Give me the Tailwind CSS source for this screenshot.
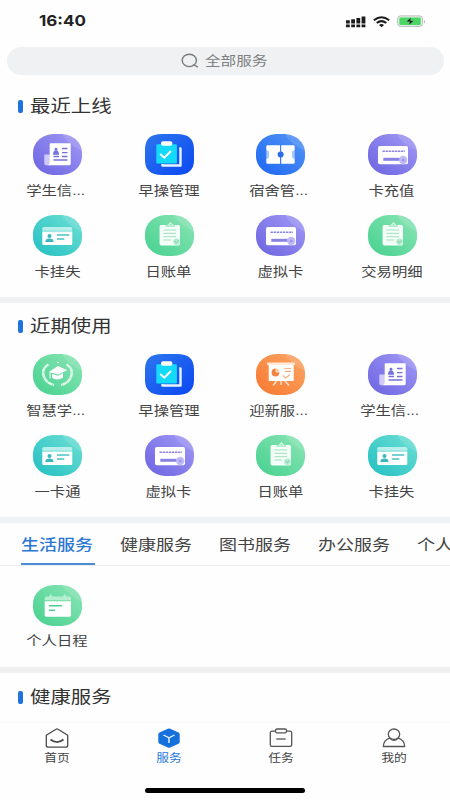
<!DOCTYPE html>
<html lang="zh-CN">
<head>
<meta charset="utf-8">
<meta name="viewport" content="width=device-width">
<title>服务</title>
<script src="https://cdn.jsdelivr.net/npm/@tailwindcss/browser@4"></script>
</head>
<body class="w-[450px] h-[800px] overflow-hidden bg-[#fefefe] font-['Liberation_Sans','Noto_Sans_CJK_SC',sans-serif] text-[#444]">
<svg width="0" height="0" class="absolute">
  <defs>
    <linearGradient id="gp" x1="0" y1="1" x2="1" y2="0"><stop offset="0" stop-color="#6b63e0"/><stop offset="1" stop-color="#a29af5"/></linearGradient>
    <linearGradient id="gb" x1="0" y1="0" x2="1" y2="1"><stop offset="0" stop-color="#2d76ee"/><stop offset="1" stop-color="#0b48f2"/></linearGradient>
    <linearGradient id="gs" x1="0" y1="1" x2="1" y2="0"><stop offset="0" stop-color="#1c66f2"/><stop offset="1" stop-color="#5596f6"/></linearGradient>
    <linearGradient id="gt" x1="0" y1="1" x2="1" y2="0"><stop offset="0" stop-color="#22bfc2"/><stop offset="1" stop-color="#6fe0d4"/></linearGradient>
    <linearGradient id="gg" x1="0" y1="1" x2="1" y2="0"><stop offset="0" stop-color="#45d18e"/><stop offset="1" stop-color="#8ce5b6"/></linearGradient>
    <linearGradient id="go" x1="0" y1="1" x2="1" y2="0"><stop offset="0" stop-color="#f8772d"/><stop offset="1" stop-color="#fba768"/></linearGradient>
    <path id="blob" d="M22 0H27C40 0 49 8.5 49 19V22C49 32.500 40 41 27 41H22C9 41 0 32.500 0 22V19C0 8.500 9 0 22 0Z"/>
    <path id="shine" d="M29 0Q33 9 49 17Q48 8 41 4Q36 0 29 0Z" fill="#fff" opacity=".12"/>
    <symbol id="news" viewBox="0 0 49 41">
      <use href="#blob" fill="url(#gp)"/><use href="#shine"/>
      <path d="M11.3 20.5H17V31.3H13Q11.3 31.3 11.3 29.5Z" fill="#cfcafa"/>
      <path d="M16.7 10.3Q16.7 9.3 17.7 9.3H36.7Q37.7 9.3 37.7 10.3V29.8Q37.7 31.3 36 31.3H14.5Q16.7 31 16.7 28.5Z" fill="#fff"/>
      <g stroke="#7771dc" stroke-width="1.3" fill="#7771dc"><circle cx="23" cy="15.2" r="1.4" stroke="none"/><path d="M20.7 20Q21 17 23 17T25.3 20ZM29 14.5H34.5M29 18.7H34.5M20.5 22.5H26M29 22.5H34.5M20.5 26H34.5"/></g>
    </symbol>
    <symbol id="clip" viewBox="0 0 49 41">
      <path d="M17 0H32Q49 0 49 15V26Q49 41 32 41H17Q0 41 0 26V15Q0 0 17 0Z" fill="url(#gb)"/>
      <path d="M34.2 14.5H35.5V31.5H17.5V30" fill="none" stroke="#e8f4ff" stroke-width="2.4" stroke-linejoin="round"/>
      <rect x="11.3" y="10.2" width="20.6" height="19.3" rx="1.2" fill="#14dafa"/>
      <rect x="16" y="7.2" width="11.4" height="4.5" rx="2" fill="#fff"/>
      <path d="M15.2 20L19.3 23.7L26 17" fill="none" stroke="#fff" stroke-width="2"/>
    </symbol>
    <symbol id="ticket" viewBox="0 0 49 41">
      <use href="#blob" fill="url(#gs)"/><use href="#shine"/>
      <path d="M11.5 11.3H24V29.7H11.5Q10.3 29.7 10.3 28.5V25L13 23V18L10.3 16V12.5Q10.3 11.3 11.5 11.3ZM25.2 11.3H37.5Q38.7 11.3 38.7 12.5V16L36 18V23L38.7 25V28.5Q38.7 29.7 37.5 29.7H25.2Z" fill="#fff"/>
      <path d="M10.3 16L13 18V23L10.3 25ZM38.7 16L36 18V23L38.7 25Z" fill="#a8c9ff"/>
      <circle cx="24.6" cy="20.6" r="3" fill="#2b6de9"/>
    </symbol>
    <symbol id="card" viewBox="0 0 49 41">
      <use href="#blob" fill="url(#gp)"/><use href="#shine"/>
      <rect x="10" y="12" width="30" height="18.3" rx="1.8" fill="#fff"/>
      <path d="M14.5 17.2H37" stroke="#8984e5" stroke-width="1.4" stroke-dasharray="2.4 .7"/>
      <path d="M15.3 25.3H32" stroke="#8883e2" stroke-width="3"/>
      <circle cx="35.2" cy="26" r="4.2" fill="#c0bbf7"/><circle cx="35.2" cy="26" r="1.6" fill="#9f99ea"/>
    </symbol>
    <symbol id="idcard" viewBox="0 0 49 41">
      <use href="#blob" fill="url(#gt)"/><use href="#shine"/>
      <path d="M9.3 15.7V13.5Q9.3 12 10.8 12H37.8Q39.3 12 39.3 13.5V15.7Z" fill="#b9efea"/>
      <path d="M9.3 16.5H39.3V28.8Q39.3 30 38 30H10.6Q9.3 30 9.3 28.8Z" fill="#fff"/>
      <circle cx="16.5" cy="21" r="2" fill="#38b9bd"/><path d="M12.3 27Q12.3 23.6 16.5 23.6T20.5 27Z" fill="#38b9bd"/>
      <path d="M24 20H36.3M24 24H31.3" stroke="#4ac3c4" stroke-width="1.5"/>
    </symbol>
    <symbol id="bill" viewBox="0 0 49 41">
      <use href="#blob" fill="url(#gg)"/><use href="#shine"/>
      <path d="M23 10.5L25.5 8L28 10.5" fill="none" stroke="#d8f7e7" stroke-width="1.3"/>
      <rect x="14.6" y="10" width="20.4" height="20.5" rx="1.7" fill="#f4fff9"/>
      <path d="M20.5 10H30V12H20.5Z" fill="#b5efd0"/>
      <path d="M18.5 15H31M18.5 18.3H31M18.5 21.7H31M18.5 25H26" stroke="#a0dfbd" stroke-width="1"/>
      <circle cx="31.5" cy="26.7" r="3.3" fill="#b5ecd0"/><path d="M29.5 26L31.4 27.7L33.6 25.5" fill="none" stroke="#6fcb9b"/>
    </symbol>
    <symbol id="grad" viewBox="0 0 49 41">
      <use href="#blob" fill="url(#gg)"/><use href="#shine"/>
      <path d="M15.5 10.5Q7.500 15 11.5 24Q14 29.3 21 31M33.5 10.5Q41.5 15 37.5 24Q35 29.3 28 31" fill="none" stroke="#dcf9e9" stroke-width="2.5" stroke-dasharray="5 .3"/>
      <path d="M15.8 18L25 12L34.2 16.2L25 20.5Z" fill="#fff"/><path d="M19 20V23.5Q23 27.5 30 23.8V19L25 21.8Z" fill="#fff"/><path d="M17 18.3V24.5" stroke="#fff"/><circle cx="25" cy="8.5" r=".8" fill="#fff"/>
    </symbol>
    <symbol id="board" viewBox="0 0 49 41">
      <use href="#blob" fill="url(#go)"/><use href="#shine"/>
      <path d="M21.5 26L17 31.5M28 26L33 31.5M25 26V31" stroke="#ffe0c7" stroke-width="1.5"/>
      <rect x="12.7" y="10" width="25" height="17" fill="#fff"/><rect x="11" y="8.5" width="28" height="2.6" rx=".8" fill="#ffe9da"/>
      <circle cx="19.5" cy="18.5" r="3.9" fill="#f28442"/><path d="M20 18V14.2A4 4 0 0 1 23.8 18Z" fill="#ffc79f" stroke="#fff" stroke-width=".6"/>
      <path d="M28.5 14.5H35M28.5 17.3H35M27 21.5L29.5 24L34 20.8" fill="none" stroke="#f8b083" stroke-width="1.2"/>
    </symbol>
    <symbol id="cal" viewBox="0 0 49 41">
      <use href="#blob" fill="url(#gg)"/><use href="#shine"/>
      <path d="M11.7 15.3V13Q11.7 11.5 13 11.5H16L17.7 8.5L19.4 11.5H30L31.7 8.5L33.4 11.5H36.5Q38 11.5 38 13V15.3Z" fill="#b4efd0"/>
      <path d="M11.7 16.3H38V30.3Q38 31.7 36.6 31.7H13Q11.7 31.7 11.7 30.3Z" fill="#fff"/>
      <path d="M16 20.8H29M16 25.3H22" stroke="#50cd90" stroke-width="1.4"/>
    </symbol>
  </defs>
</svg>

<div class="flex h-full flex-col">
  <header class="flex h-[47px] shrink-0 items-start justify-between pl-[39px] pr-[24px] pt-[11px]">
    <span class="origin-left scale-x-[1.13] font-['Inter','Liberation_Sans',sans-serif] text-[15px] font-bold leading-5 text-[#222]">16:40</span>
    <div class="flex h-5 items-center gap-[7px] pt-px">
      <svg width="20" height="12" viewBox="0 0 20 12" fill="#1b1b1b"><path d="M0 4.2H3.8V7.4H0ZM5.2 3.2H9V7.4H5.2ZM10.4 2H14.2V7.4H10.4ZM15.6 .5H19.4V7.400H15.6ZM0 8.4H3.8V11.2H0ZM5.2 8.4H9V11.2H5.2ZM10.4 8.4H14.2V11.2H10.4ZM15.6 8.4H19.4V11.2H15.6Z"/></svg>
      <svg width="17" height="12" viewBox="0 0 17 12" fill="none" stroke="#1b1b1b" stroke-width="2"><path d="M.8 4.2Q8.5 -1.7 16.2 4.2M3.7 7Q8.5 3.3 13.3 7"/><path d="M6 9Q8.5 7 11 9L8.5 11.3Z" fill="#1b1b1b" stroke="none"/></svg>
      <svg width="29" height="13" viewBox="0 0 29 13"><rect x=".6" y=".9" width="25" height="10.500" rx="3" fill="#e8f3ea" stroke="#b5bdb6"/><rect x="2.3" y="2.5" width="21.5" height="7.5" rx="1.3" fill="#4bd565"/><path d="M27 4.5Q28.7 6.5 27 8.5Z" fill="#a2a9a3"/><path d="M14 2.500L9 6.700H12.5L11.8 10L17 5.800H13.6Z" fill="#111" stroke="#7ce38e" stroke-width=".4"/></svg>
    </div>
  </header>

  <div class="ml-[7px] flex h-[28px] w-[437px] shrink-0 items-center rounded-[14px] bg-[#f0f1f3] pl-[174px] text-[#7d7f82]">
    <svg width="18" height="16" viewBox="0 0 18 16" fill="none" stroke="#77797c" stroke-width="1.4"><ellipse cx="8.3" cy="7.4" rx="7.1" ry="6.2"/><path d="M12.5 11.5L16.8 14.2"/></svg>
    <span class="ml-[6px] origin-left scale-x-[1.2] pb-px text-[13px] leading-none">全部服务</span>
  </div>

  <section class="h-[222px] shrink-0">
    <h2 class="flex h-[59px] items-center pl-[18px] pt-[4px] text-[17px] text-[#333]"><i class="mr-[7px] h-[13px] w-[5px] rounded-[2px] bg-[#1f74db]"></i><span class="origin-left scale-x-[1.2] leading-none">最近上线</span></h2>
    <div class="ml-[2px] grid w-[446px] grid-cols-4 gap-y-[16px] text-center text-[13px] leading-[14px]">
      <div class="flex h-[65px] flex-col items-center"><svg width="49" height="41"><use href="#news"/></svg><span class="mt-[9px] w-[54px] scale-x-[1.18] whitespace-nowrap text-left">学生信...</span></div>
      <div class="flex h-[65px] flex-col items-center"><svg width="49" height="41"><use href="#clip"/></svg><span class="mt-[9px] scale-x-[1.18]">早操管理</span></div>
      <div class="flex h-[65px] flex-col items-center"><svg width="49" height="41"><use href="#ticket"/></svg><span class="mt-[9px] w-[54px] scale-x-[1.18] whitespace-nowrap text-left">宿舍管...</span></div>
      <div class="flex h-[65px] flex-col items-center"><svg width="49" height="41"><use href="#card"/></svg><span class="mt-[9px] scale-x-[1.18] pr-px">卡充值</span></div>
      <div class="flex h-[65px] flex-col items-center"><svg width="49" height="41"><use href="#idcard"/></svg><span class="mt-[9px] scale-x-[1.18]">卡挂失</span></div>
      <div class="flex h-[65px] flex-col items-center"><svg width="49" height="41"><use href="#bill"/></svg><span class="mt-[9px] scale-x-[1.18] pr-px">日账单</span></div>
      <div class="flex h-[65px] flex-col items-center"><svg width="49" height="41"><use href="#card"/></svg><span class="mt-[9px] scale-x-[1.18] pr-px">虚拟卡</span></div>
      <div class="flex h-[65px] flex-col items-center"><svg width="49" height="41"><use href="#bill"/></svg><span class="mt-[9px] scale-x-[1.18] pr-px">交易明细</span></div>
    </div>
  </section>
  <div class="h-[6px] shrink-0 bg-[#f0f1f3]"></div>

  <section class="h-[214px] shrink-0">
    <h2 class="flex h-[51px] items-center pb-[4px] pl-[18px] text-[17px] text-[#333]"><i class="mr-[7px] h-[13px] w-[5px] rounded-[2px] bg-[#1f74db]"></i><span class="origin-left scale-x-[1.2] leading-none">近期使用</span></h2>
    <div class="ml-[2px] grid w-[446px] grid-cols-4 gap-y-[16px] text-center text-[13px] leading-[14px]">
      <div class="flex h-[65px] flex-col items-center"><svg width="49" height="41"><use href="#grad"/></svg><span class="mt-[9px] w-[54px] scale-x-[1.18] whitespace-nowrap text-left">智慧学...</span></div>
      <div class="flex h-[65px] flex-col items-center"><svg width="49" height="41"><use href="#clip"/></svg><span class="mt-[9px] scale-x-[1.18]">早操管理</span></div>
      <div class="flex h-[65px] flex-col items-center"><svg width="49" height="41"><use href="#board"/></svg><span class="mt-[9px] w-[54px] scale-x-[1.18] whitespace-nowrap text-left">迎新服...</span></div>
      <div class="flex h-[65px] flex-col items-center"><svg width="49" height="41"><use href="#news"/></svg><span class="mt-[9px] w-[54px] scale-x-[1.18] whitespace-nowrap text-left">学生信...</span></div>
      <div class="flex h-[65px] flex-col items-center"><svg width="49" height="41"><use href="#idcard"/></svg><span class="mt-[9px] scale-x-[1.18]">一卡通</span></div>
      <div class="flex h-[65px] flex-col items-center"><svg width="49" height="41"><use href="#card"/></svg><span class="mt-[9px] scale-x-[1.18] pr-px">虚拟卡</span></div>
      <div class="flex h-[65px] flex-col items-center"><svg width="49" height="41"><use href="#bill"/></svg><span class="mt-[9px] scale-x-[1.18] pr-px">日账单</span></div>
      <div class="flex h-[65px] flex-col items-center"><svg width="49" height="41"><use href="#idcard"/></svg><span class="mt-[9px] scale-x-[1.18] pr-px">卡挂失</span></div>
    </div>
  </section>
  <div class="h-[6px] shrink-0 bg-[#f0f1f3]"></div>

  <nav class="flex h-[43px] w-[450px] shrink-0 gap-[25px] overflow-hidden border-b border-[#ededef] pl-[21px] text-[15px] leading-[43px]">
    <span class="h-[42px] w-[74px] shrink-0 border-b-2 border-[#4c8ed6] font-medium text-[#2b77d4]"><span class="inline-block origin-left scale-x-[1.2] whitespace-nowrap">生活服务</span></span>
    <span class="w-[74px] shrink-0"><span class="inline-block origin-left scale-x-[1.2] whitespace-nowrap">健康服务</span></span>
    <span class="w-[74px] shrink-0"><span class="inline-block origin-left scale-x-[1.2] whitespace-nowrap">图书服务</span></span>
    <span class="w-[74px] shrink-0"><span class="inline-block origin-left scale-x-[1.2] whitespace-nowrap">办公服务</span></span>
    <span class="w-[74px] shrink-0"><span class="inline-block origin-left scale-x-[1.2] whitespace-nowrap">个人</span></span>
  </nav>
  <section class="ml-[2px] grid h-[101px] w-[446px] shrink-0 grid-cols-4 pt-[19px] text-[13px] leading-[14px]">
    <div class="flex flex-col items-center"><svg width="49" height="41"><use href="#cal"/></svg><span class="mt-[8px] scale-x-[1.18] pr-px">个人日程</span></div>
  </section>
  <div class="h-[6px] shrink-0 bg-[#f0f0f1]"></div>
  <h2 class="flex h-[49px] shrink-0 items-center pl-[18px] text-[17px] text-[#333]"><i class="mr-[7px] h-[13px] w-[5px] rounded-[2px] bg-[#1f74db]"></i><span class="origin-left scale-x-[1.2] leading-none">健康服务</span></h2>

  <footer class="flex grow flex-col border-t border-[#fafafa]">
    <div class="grid h-[63px] grid-cols-4 pt-[5px] text-[11px] leading-[12px]">
      <div class="flex flex-col items-center pl-px"><svg width="24" height="21" viewBox="0 0 24 21" fill="none" stroke="#4a4a4a" stroke-width="1.3" stroke-linejoin="round"><path d="M1.3 7.3L11 1.2Q12 .5 13 1.2L22.700 7.3V17.5Q22.700 19.2 20.500 19.2H3.500Q1.300 19.2 1.300 17.5Z"/><path d="M5.500 11.500Q12 16.8 18.500 11.500" stroke-width="1.7"/></svg><span class="mt-[3px] scale-x-[1.16]">首页</span></div>
      <div class="flex flex-col items-center text-[#2678dd]"><svg width="24" height="21" viewBox="0 0 24 21"><path d="M10.8 .8Q12 .2 13.2 .8L21.5 4.5Q22.7 5 22.7 6.2V14Q22.7 15.2 21.5 15.8L13.2 19.6Q12 20.1 10.8 19.6L2.5 15.8Q1.3 15.2 1.3 14V6.2Q1.3 5 2.5 4.5Z" fill="#1570dc"/><path d="M6.5 7L12 9.8L17.5 7M12 9.8V15" fill="none" stroke="#eef5ff" stroke-width="1.4"/></svg><span class="mt-[3px] scale-x-[1.16]">服务</span></div>
      <div class="flex flex-col items-center"><svg width="24" height="21" viewBox="0 0 24 21" fill="none" stroke="#555" stroke-width="1.3"><path d="M6.5 3.2H3Q1.3 3.2 1.3 4.8V16.8Q1.3 18.4 3 18.4H21Q22.7 18.4 22.7 16.8V4.8Q22.7 3.2 21 3.2H17.5"/><rect x="6.5" y="1" width="11" height="3.8" rx="1.5"/><path d="M7.3 11H16.7"/></svg><span class="mt-[3px] scale-x-[1.16]">任务</span></div>
      <div class="flex flex-col items-center"><svg width="24" height="21" viewBox="0 0 24 21" fill="none" stroke="#555" stroke-width="1.3" stroke-linejoin="round"><ellipse cx="12" cy="6.2" rx="5.7" ry="5.2"/><path d="M8 10.2Q1.6 12 1.3 18.5H22.7Q22.4 12 16 10.2M8 10.2Q12 14.3 16 10.2"/></svg><span class="mt-[3px] scale-x-[1.16]">我的</span></div>
    </div>
    <div class="ml-[145px] mt-[2px] h-[5px] w-[160px] rounded-full bg-black"></div>
  </footer>
</div>
</body>
</html>
